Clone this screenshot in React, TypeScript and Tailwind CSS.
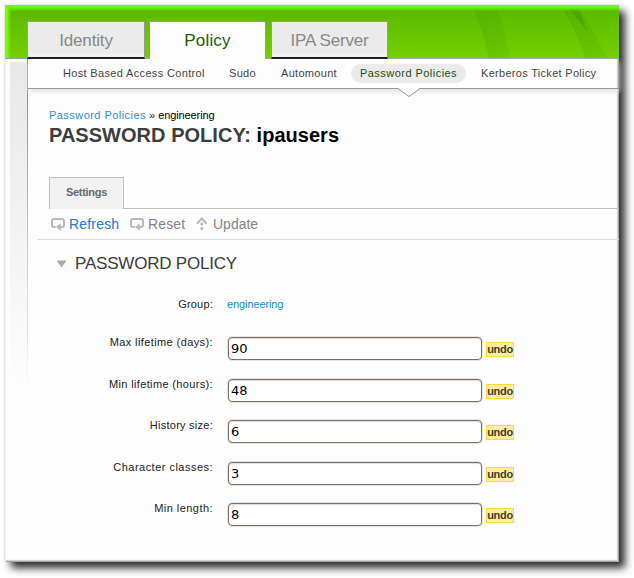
import React from 'react';

const fields = [
  { label: 'Max lifetime (days):', value: '90', height: 'h-[42px]', tracking: 'tracking-[0.4px]' },
  { label: 'Min lifetime (hours):', value: '48', height: 'h-[41px]', tracking: 'tracking-[0.35px]' },
  { label: 'History size:', value: '6', height: 'h-[42px]', tracking: 'tracking-[0.25px]' },
  { label: 'Character classes:', value: '3', height: 'h-[41px]', tracking: 'tracking-[0.48px]' },
  { label: 'Min length:', value: '8', height: 'h-[42px]', tracking: 'tracking-[0.45px]' },
];

function ReloadIcon() {
  return (
    <svg width="14" height="13" viewBox="0 0 14 13" fill="none" className="shrink-0">
      <path d="M4.6 9H3Q1 9 1 7V3Q1 1 3 1H11Q13 1 13 3V7Q13 9 11 9H9" stroke="#b9b9b9" strokeWidth="2" />
      <path d="M9.8 5.2V12.8L5 9Z" fill="#b9b9b9" />
    </svg>
  );
}

function UpdateIcon() {
  return (
    <svg width="12" height="14" viewBox="0 0 12 14" fill="none" className="shrink-0">
      <path d="M.9 6.7 5.8 1.6 10.7 6.7" stroke="#b9b9b9" strokeWidth="2.2" />
      <rect x="4.4" y="5.6" width="2.8" height="2.8" rx="1" fill="#b9b9b9" />
      <rect x="4.4" y="10.2" width="2.8" height="2.8" rx="1" fill="#b9b9b9" />
    </svg>
  );
}

function Header() {
  return (
    <header className="relative h-[54px] border-b border-[#a0a0a0] bg-linear-to-b from-[#58b700] to-[#75d000]">
      <svg className="absolute inset-0" width="614" height="53" preserveAspectRatio="none">
        <defs>
          <linearGradient id="ray" x1="0" x2="1" y1="0" y2="0">
            <stop offset="0" stopColor="#398c00" stopOpacity=".22" />
            <stop offset="1" stopColor="#398c00" stopOpacity=".1" />
          </linearGradient>
          <linearGradient id="top" x1="0" x2="0" y1="0" y2="1">
            <stop offset="0" stopColor="#70ff00" />
            <stop offset=".45" stopColor="#68f000" />
            <stop offset="1" stopColor="#60d000" stopOpacity="0" />
          </linearGradient>
          <linearGradient id="left" x1="0" x2="1" y1="0" y2="0">
            <stop offset="0" stopColor="#7dff00" />
            <stop offset=".4" stopColor="#78f500" />
            <stop offset="1" stopColor="#60d000" stopOpacity="0" />
          </linearGradient>
        </defs>
        <path d="M466 0H491Q500 22 505 53H484Q478 24 466 0Z" fill="url(#ray)" />
        <path d="M555 0H571Q588 23 602 53H580Q571 23 555 0Z" fill="url(#ray)" />
        <path d="M560 0H572L583 28Q575 15 560 0Z" fill="#398c00" opacity=".35" />
        <rect width="614" height="7" fill="url(#top)" />
        <rect width="7" height="53" fill="url(#left)" />
      </svg>
      <div className="relative flex pt-4 pl-[22px] text-[17px] leading-[37px]">
        <div className="h-[38px] w-[118px] border border-b-2 border-[#999] border-b-[#111] bg-linear-to-b from-[#ebebeb] from-85% to-[#f5f5f5] text-center tracking-[-0.15px] text-[#888]">Identity</div>
        <div className="ml-1 h-[38px] w-[117px] border border-b-0 border-[#999] bg-[#fdfdfd] text-center tracking-[0.2px] text-[#1f5c08]">Policy</div>
        <div className="ml-[5px] h-[38px] w-[117px] border border-b-2 border-[#999] border-b-[#111] bg-linear-to-b from-[#ebebeb] from-85% to-[#f5f5f5] text-center tracking-[-0.2px] text-[#888]">IPA Server</div>
      </div>
    </header>
  );
}

function SubNav() {
  return (
    <nav className="relative flex h-[30px] shrink-0 items-start border-b border-[#999] pt-[5px] pl-[35px] text-[11px] leading-[19px] tracking-[0.3px] whitespace-nowrap text-[#444] shadow-[0_3px_5px_#e4e4e4]">
      <span className="w-[166px] tracking-[0.34px]">Host Based Access Control</span>
      <span className="w-[52px]">Sudo</span>
      <span className="w-[70px]">Automount</span>
      <span className="w-[115px] rounded-full bg-[#ebebeb] pl-[9px] tracking-[0.46px] text-[#1f4d10]">Password Policies</span>
      <span className="pl-[15px]">Kerberos Ticket Policy</span>
      <svg className="absolute top-[29px] left-[369px]" width="24" height="10">
        <path d="M1 0H23L12 8.5Z" fill="#fdfdfd" />
        <path d="M0 .5H1L12 8.5 23 .5H24" fill="none" stroke="#999" />
      </svg>
    </nav>
  );
}

export default function App() {
  return (
    <div className="h-[578px] w-[634px] overflow-hidden bg-white pt-[5px] pl-[5px] font-['Liberation_Sans',Arial,sans-serif]">
      <div className="flex h-[557px] w-[614px] flex-col bg-[#fdfdfd] shadow-[6px_6px_8px_#2d2d2d,0_0_2px_#ddd]">
        <Header />
        <div className="flex min-h-0 flex-1 border-l border-[#eee] shadow-[inset_-1px_-1px_0_#a5a5a5,inset_-2px_-2px_1px_#ccc]">
          <div className="mt-[3px] ml-1 h-[330px] w-[17px] shrink-0 bg-linear-to-b from-[#e8e8e8] to-[#fdfdfd]" />
          <div className="h-[335px] w-px shrink-0 bg-linear-to-b from-[#888] to-[#fdfdfd]" />
          <main className="flex min-w-0 flex-1 flex-col">
            <SubNav />
            <div className="pt-5 pl-[21px]">
              <div className="flex h-[13px] items-center text-[11px] whitespace-pre">
                <span className="tracking-[0.45px] text-[#318dd5]">Password Policies</span>
                <span className="text-[#125]"> » </span>
                <span className="tracking-[-0.1px] text-black">engineering</span>
              </div>
              <h1 className="h-[27px] text-[20px] leading-[27px] font-bold tracking-[0.03px] whitespace-pre text-[#3d3d3d]">PASSWORD POLICY: <span className="text-black">ipausers</span></h1>
              <div className="mt-[28px] flex h-8">
                <div className="w-[75px] border border-b-0 border-[#c6bfb5] bg-[#f2f2f2] text-center text-[11px] leading-[29px] font-bold tracking-[-0.3px] text-[#686868]">Settings</div>
                <div className="flex-1 border-b border-[#c6bfb5]" />
              </div>
            </div>
            <div className="ml-[9px] flex h-[31px] shrink-0 items-center border-b border-[#ddd] pl-[14px] text-[14px] text-[#858585]">
              <ReloadIcon /><span className="w-[61px] pl-1 tracking-[0.18px] text-[#2579cc]">Refresh</span>
              <span className="ml-1 flex items-center"><ReloadIcon /><span className="w-[52px] pl-1 tracking-[0.15px]">Reset</span></span>
              <UpdateIcon /><span className="pl-[5px]">Update</span>
            </div>
            <div className="mt-3 flex h-6 items-center pl-[28px]">
              <svg width="11" height="8"><path d="M.5 .5H10.5L5.5 7.5Z" fill="#aaa" /></svg>
              <h2 className="pl-2 text-[17px] leading-6 tracking-[-0.2px] text-[#3b3b3b]">PASSWORD POLICY</h2>
            </div>
            <div className="mt-[22px] flex h-[39px] text-[11px] leading-[13px]">
              <span className="w-[185px] text-right tracking-[0.2px] text-[#222]">Group:</span>
              <span className="pl-[14px] tracking-[-0.1px] text-[#158bdc]">engineering</span>
            </div>
            {fields.map((field) => (
              <div key={field.label} className={`flex shrink-0 items-start ${field.height}`}>
                <label className={`-mt-px w-[185px] text-right text-[11px] leading-[13px] whitespace-nowrap text-[#222] ${field.tracking}`}>{field.label}</label>
                <input className="ml-[15px] h-[23px] w-[254px] rounded-[4px] border border-[#7b7064] bg-white pb-px pl-[2px] font-['DejaVu_Sans',sans-serif] text-[13px] text-black shadow-[0_0_0_1px_#e8e3de,inset_0_1px_1px_#ddd]" defaultValue={field.value} />
                <span className="mt-[5px] ml-1 h-[15px] w-7 border border-[#ffd83a] bg-[#ffeda0] text-center text-[11px] leading-[13px] font-bold tracking-[-0.3px] text-[#443e25]">undo</span>
              </div>
            ))}
          </main>
        </div>
      </div>
    </div>
  );
}
